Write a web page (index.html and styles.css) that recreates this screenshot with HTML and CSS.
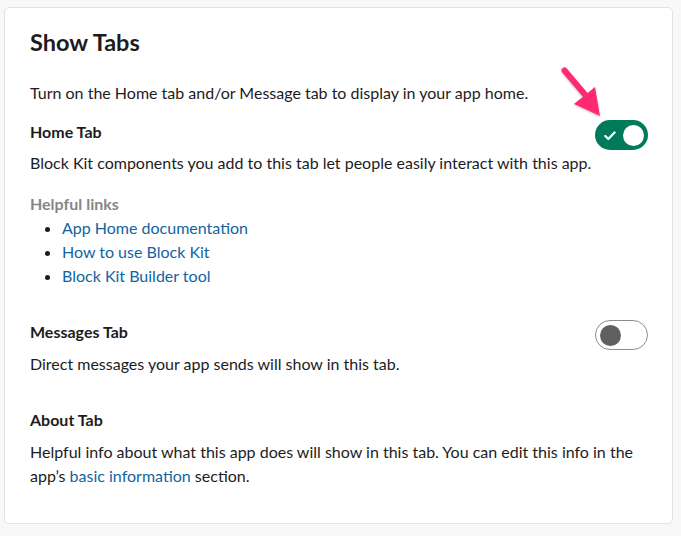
FILE: index.html
```html
<!DOCTYPE html>
<html lang="en">
<head>
<meta charset="utf-8">
<title>Show Tabs</title>
<link rel="stylesheet" href="styles.css">
</head>
<body>
<div class="card">
  <h1 class="title">Show Tabs</h1>
  <p class="intro">Turn on the Home tab and/or Message tab to display in your app home.</p>

  <section class="section home">
    <div class="row">
      <h2 class="heading">Home Tab</h2>
      <span class="toggle on" role="switch" aria-checked="true">
        <svg class="check" width="12" height="10" viewBox="0 0 12 10"><path d="M1.3 5 L4.3 8 L10.6 1.5" fill="none" stroke="#fff" stroke-width="2.3" stroke-linecap="round" stroke-linejoin="round"/></svg>
        <span class="knob"></span>
      </span>
    </div>
    <p class="desc">Block Kit components you add to this tab let people easily interact with this app.</p>
    <div class="links-label">Helpful links</div>
    <ul class="links">
      <li><a href="#">App Home documentation</a></li>
      <li><a href="#">How to use Block Kit</a></li>
      <li><a href="#">Block Kit Builder tool</a></li>
    </ul>
  </section>

  <section class="section messages">
    <div class="row">
      <h2 class="heading">Messages Tab</h2>
      <span class="toggle off" role="switch" aria-checked="false"><span class="knob"></span></span>
    </div>
    <p class="desc">Direct messages your app sends will show in this tab.</p>
  </section>

  <section class="section about">
    <div class="row">
      <h2 class="heading">About Tab</h2>
    </div>
    <p class="desc">Helpful info about what this app does will show in this tab. You can edit this info in the app’s <a href="#">basic information</a> section.</p>
  </section>

  <svg class="arrow" width="50" height="60" viewBox="555 60 50 60">
    <defs>
      <filter id="sh" x="-30%" y="-30%" width="160%" height="160%">
        <feGaussianBlur in="SourceAlpha" stdDeviation="1"/>
        <feOffset dx="0" dy="1"/>
        <feComponentTransfer><feFuncA type="linear" slope="0.25"/></feComponentTransfer>
        <feMerge><feMergeNode/><feMergeNode in="SourceGraphic"/></feMerge>
      </filter>
    </defs>
    <g filter="url(#sh)" fill="#ff2b72">
      <path d="M564.5 70.5 L587 97" stroke="#ff2b72" stroke-width="6" stroke-linecap="round"/>
      <polygon points="574,104 595,87 600,116"/>
    </g>
  </svg>
</div>
</body>
</html>
```

FILE: styles.css
```css
* { box-sizing: border-box; }

html, body {
  margin: 0;
  padding: 0;
  background: #f8f8f8;
}

body {
  font-family: Lato, "Open Sans", "Liberation Sans", sans-serif;
  color: #1d1c1d;
  font-size: 16px;
  line-height: 24px;
}

.card {
  position: relative;
  margin: 7px 8px 0 4px;
  height: 517px;
  background: #fff;
  border: 1px solid #e2e2e2;
  border-radius: 5px;
  padding: 20px 24px 0 25px;
}

.title {
  margin: 0;
  font-size: 23.5px;
  line-height: 28px;
  font-weight: 700;
}

.intro {
  margin: 25px 0 0;
}

.section { margin-top: 32px; }
.section.home { margin-top: 15px; }

.row {
  display: flex;
  justify-content: space-between;
  align-items: flex-start;
}

.heading {
  margin: 0;
  font-size: 16px;
  line-height: 24px;
  font-weight: 700;
}

.desc {
  margin: 7px 0 0;
}
.messages .desc, .about .desc { margin-top: 8px; }

.links-label {
  margin-top: 17px;
  color: #868686;
  font-weight: 700;
}

.links {
  margin: 0;
  padding-left: 32px;
}

a {
  color: #1264a3;
  text-decoration: none;
}

.toggle {
  flex: none;
  width: 53px;
  height: 30px;
  border-radius: 15px;
  display: flex;
  align-items: center;
  margin-bottom: -6px;
}

.toggle.on {
  background: #007a5a;
  padding: 0 4px 0 9px;
  justify-content: space-between;
}

.toggle.on .knob {
  width: 21px;
  height: 21px;
  border-radius: 50%;
  background: #fff;
}

.check { display: block; margin-top: 1px; }

.toggle.off {
  background: #fff;
  border: 1px solid #8d8d8d;
  padding-left: 4px;
}

.toggle.off .knob {
  width: 21px;
  height: 21px;
  border-radius: 50%;
  background: #616061;
}

.arrow {
  position: absolute;
  left: 550px;
  top: 52px;
  overflow: visible;
}
```
